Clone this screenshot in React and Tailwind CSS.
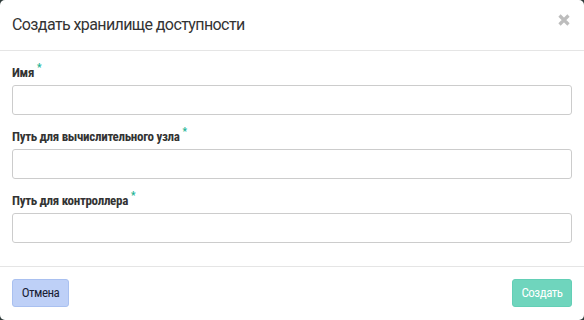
import React from 'react';

const cond = { fontFamily: '"Roboto Condensed", "Liberation Sans Narrow", Roboto, sans-serif' };

function Field({ label }) {
  return (
    <div className="flex flex-col">
      <label className="text-[13px] font-bold text-[#333] leading-[14px] mb-[5px] flex items-start tracking-[-0.3px]" style={cond}>
        {label}
        <span className="text-[#1ab394] text-[10px] leading-[10px] ml-[3px] -mt-[3px]">*</span>
      </label>
      <input className="h-[30px] w-full rounded-[3px] border border-[#cccccc] bg-white px-2 outline-none" />
    </div>
  );
}

export default function App() {
  return (
    <div className="w-[584px] h-[320px] bg-[#2f3b3a]">
      <div className="w-full h-full bg-white rounded-[5px] flex flex-col overflow-hidden">
        {/* Header */}
        <div className="h-[51px] border-b border-[#e5e5e5] flex items-start justify-between pl-3 pr-[14px]">
          <h4 className="text-[16px] text-[#333] tracking-[-0.6px] mt-[15px] leading-[20px]" style={{ fontFamily: 'Roboto, sans-serif' }}>
            Создать хранилище доступности
          </h4>
          <svg width="12" height="12" viewBox="0 0 12 12" className="mt-[14px]">
            <path d="M1.5 1.5 L10.5 10.5 M10.5 1.5 L1.5 10.5" stroke="#bdbdbd" strokeWidth="3.2" />
          </svg>
        </div>

        {/* Body */}
        <div className="flex flex-col gap-[15px] px-3 pt-[15px] h-[216px] border-b border-[#e5e5e5]">
          <Field label="Имя" />
          <Field label="Путь для вычислительного узла" />
          <Field label="Путь для контроллера" />
        </div>

        {/* Footer */}
        <div className="flex items-center justify-between px-3 pt-3">
          <button className="h-[28px] w-[57px] rounded-[3px] bg-[#bed0f7] border border-[#a9c0f0] text-[13px] text-[#1a1f36] tracking-[-0.5px]" style={cond}>
            Отмена
          </button>
          <button className="h-[28px] w-[60px] rounded-[3px] bg-[#6fd5bd] border border-[#63cfb6] text-[13px] text-white tracking-[-0.5px]" style={cond}>
            Создать
          </button>
        </div>
      </div>
    </div>
  );
}
